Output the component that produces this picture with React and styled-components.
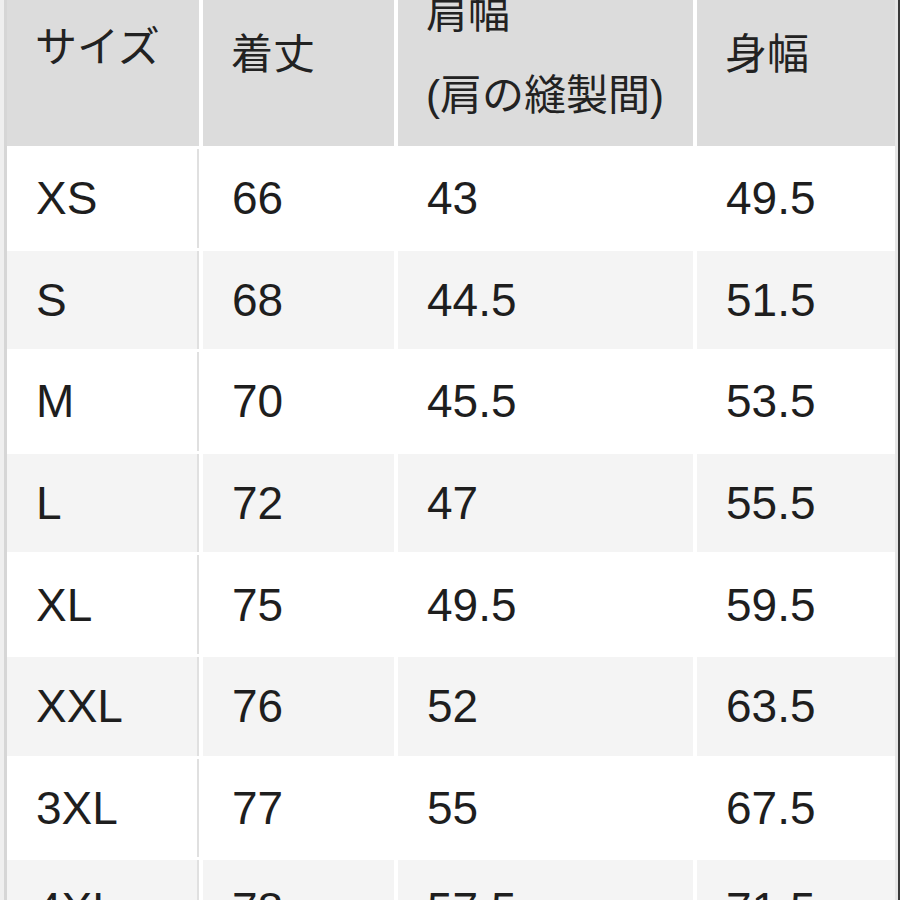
import React from "react";
import styled, { createGlobalStyle } from "styled-components";

const GlobalStyle = createGlobalStyle`
  html, body {
    margin: 0;
    padding: 0;
    background: #fff;
  }
`;

const COLUMNS = "192px 191px 295px 198px";

const ROWS = [
  ["XS", "66", "43", "49.5"],
  ["S", "68", "44.5", "51.5"],
  ["M", "70", "45.5", "53.5"],
  ["L", "72", "47", "55.5"],
  ["XL", "75", "49.5", "59.5"],
  ["XXL", "76", "52", "63.5"],
  ["3XL", "77", "55", "67.5"],
  ["4XL", "78", "57.5", "71.5"],
];

const Page = styled.div`
  width: 900px;
  height: 900px;
  box-sizing: border-box;
  overflow: hidden;
  display: flex;
  border-left: 4px solid #efefef;
  border-right: 2px solid #3a3a3a;
  background: #fff;
`;

const Table = styled.div`
  flex: 1;
  display: flex;
  flex-direction: column;
  gap: 3px;
  margin-top: -36px;
  border-left: 3px solid #d6d6d6;
  border-right: 3px solid #e6e6e6;
  background: #fff;
`;

const Row = styled.div`
  display: grid;
  grid-template-columns: ${COLUMNS};
  column-gap: 4px;
  flex: none;
  height: ${(p) => p.$height}px;
`;

const HeadCell = styled.div`
  display: flex;
  align-items: center;
  box-sizing: border-box;
  padding: 0 0 ${(p) => p.$nudge || 0}px 28px;
  background: #dcdcdc;
  color: #222;
  font-family: "Liberation Sans", "Noto Sans CJK JP", sans-serif;
  font-size: 42px;
  line-height: 82px;
`;

const Cell = styled.div`
  display: flex;
  align-items: center;
  box-sizing: border-box;
  padding-left: 29px;
  background: ${(p) => (p.$alt ? "#f4f4f4" : "#fff")};
  border-right: ${(p) => (p.$first ? "2px solid #e0e0e0" : "none")};
  color: #1e1e1e;
  font-family: "Liberation Sans", Arial, sans-serif;
  font-size: 46px;
`;

export default function App() {
  return (
    <>
      <GlobalStyle />
      <Page>
        <Table>
          <Row $height={182}>
            <HeadCell $nudge={14}>サイズ</HeadCell>
            <HeadCell>着丈</HeadCell>
            <HeadCell>
              肩幅
              <br />
              (肩の縫製間)
            </HeadCell>
            <HeadCell>身幅</HeadCell>
          </Row>
          {ROWS.map((row, i) => (
            <Row key={row[0]} $height={98.6}>
              {row.map((value, j) => (
                <Cell key={j} $alt={i % 2 === 1} $first={j === 0}>
                  {value}
                </Cell>
              ))}
            </Row>
          ))}
        </Table>
      </Page>
    </>
  );
}
